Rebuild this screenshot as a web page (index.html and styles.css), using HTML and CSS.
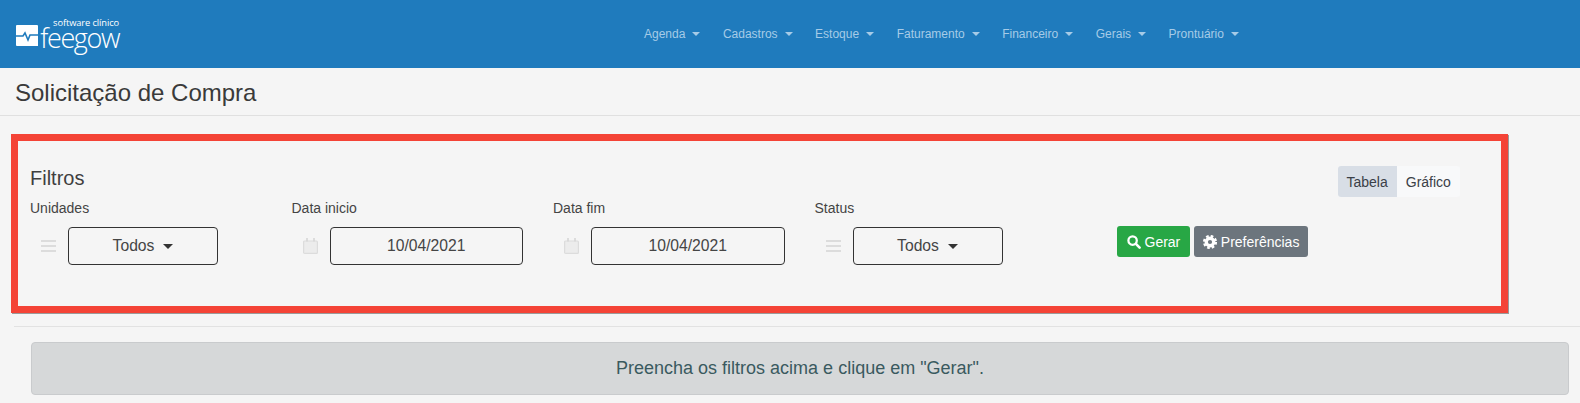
FILE: index.html
```html
<!DOCTYPE html>
<html lang="pt-BR">
<head>
<meta charset="utf-8">
<title>Solicitação de Compra</title>
<link rel="stylesheet" href="styles.css">
</head>
<body>
<header class="topbar">
  <a class="logo">
    <svg class="logo-mark" viewBox="0 0 22 21" width="22" height="21"><path fill="#fff" d="M1 0h20a1 1 0 0 1 1 1v20H1a1 1 0 0 1-1-1V1a1 1 0 0 1 1-1z"/><path fill="none" stroke="#1f7bbd" stroke-width="1.6" d="M0 11h7l2-3 3 7 2-5h8"/></svg>
    <span class="logo-words"><span class="logo-sub">software clínico</span><span class="logo-name">feegow</span></span>
  </a>
  <nav class="menu">
    <a class="menu-item">Agenda</a>
    <a class="menu-item">Cadastros</a>
    <a class="menu-item">Estoque</a>
    <a class="menu-item">Faturamento</a>
    <a class="menu-item">Financeiro</a>
    <a class="menu-item">Gerais</a>
    <a class="menu-item">Prontuário</a>
  </nav>
</header>
<div class="page-title"><h1>Solicitação de Compra</h1></div>
<section class="filters">
  <div class="filters-head">
    <h2>Filtros</h2>
    <div class="tabs"><span class="tab tab-active">Tabela</span><span class="tab">Gráfico</span></div>
  </div>
  <div class="filters-row">
    <div class="field">
      <label>Unidades</label>
      <div class="control">
        <svg class="addon" viewBox="0 0 15 14" width="15" height="14"><path stroke="#dcdcdc" stroke-width="2" d="M0 2h15M0 7h15M0 12h15"/></svg>
        <div class="box box-select">Todos<i class="caret"></i></div>
      </div>
    </div>
    <div class="field">
      <label>Data inicio</label>
      <div class="control">
        <svg class="addon" viewBox="0 0 15 16" width="15" height="16"><path fill="#ececec" stroke="#dcdcdc" stroke-width="1.2" d="M1.6 3h11.800a1 1 0 0 1 1 1v10.400a1 1 0 0 1-1 1H1.600a1 1 0 0 1-1-1V4a1 1 0 0 1 1-1z"/><path stroke="#d4d4d4" stroke-width="1.500" d="M4 0v3.500M11 0v3.500"/></svg>
        <div class="box box-date">10/04/2021</div>
      </div>
    </div>
    <div class="field">
      <label>Data fim</label>
      <div class="control">
        <svg class="addon" viewBox="0 0 15 16" width="15" height="16"><path fill="#ececec" stroke="#dcdcdc" stroke-width="1.2" d="M1.600 3h11.800a1 1 0 0 1 1 1v10.400a1 1 0 0 1-1 1H1.600a1 1 0 0 1-1-1V4a1 1 0 0 1 1-1z"/><path stroke="#d4d4d4" stroke-width="1.500" d="M4 0v3.500M11 0v3.500"/></svg>
        <div class="box box-date">10/04/2021</div>
      </div>
    </div>
    <div class="field">
      <label>Status</label>
      <div class="control">
        <svg class="addon" viewBox="0 0 15 14" width="15" height="14"><path stroke="#dcdcdc" stroke-width="2" d="M0 2h15M0 7h15M0 12h15"/></svg>
        <div class="box box-select">Todos<i class="caret"></i></div>
      </div>
    </div>
    <div class="actions">
      <button class="btn btn-green"><svg viewBox="0 0 15 15" width="14" height="14"><circle cx="6" cy="6" r="4.500" fill="none" stroke="#fff" stroke-width="2.400"/><path stroke="#fff" stroke-width="2.800" stroke-linecap="round" d="M9.800 9.800l3.700 3.700"/></svg>Gerar</button>
      <button class="btn btn-gray"><svg viewBox="0 0 16 16" width="14" height="14"><circle cx="8" cy="8" r="4.300" fill="none" stroke="#fff" stroke-width="3.800"/><circle cx="8" cy="8" r="6.800" fill="none" stroke="#fff" stroke-width="2.600" stroke-dasharray="3 2.340"/></svg>Preferências</button>
    </div>
  </div>
</section>
<hr class="divider">
<div class="alert">Preencha os filtros acima e clique em "Gerar".</div>
</body>
</html>
```
FILE: styles.css
```css
* { box-sizing: border-box; }
html, body { margin: 0; height: 403px; overflow: hidden; }
body { background: #f5f5f5; font-family: "Liberation Sans", Arial, sans-serif; color: #3b3b3b; }

.topbar { height: 68px; background: #1f7bbd; display: flex; align-items: center; }
.logo { width: 644px; padding-left: 16px; display: flex; align-items: flex-start; gap: 3px; height: 34px; margin-top: -2px; }
.logo-mark { flex: none; margin-top: 9px; }
.logo-words { display: flex; flex-direction: column; align-items: flex-end; color: #fff; width: 78px; }
.logo-sub { font-family: "Open Sans", sans-serif; font-size: 9.300px; line-height: 10px; margin-top: 2px; letter-spacing: -.1px; white-space: nowrap; }
.logo-name { font-family: "Open Sans", sans-serif; font-weight: 300; font-size: 27px; line-height: 20px; letter-spacing: -1.400px; }
.menu { display: flex; gap: 22.500px; }
.menu-item { font-size: 12px; line-height: 16px; color: #a6cbe7; display: flex; align-items: center; }
.menu-item::after { content: ""; margin-left: 7px; border-top: 4px solid #a6cbe7; border-left: 4px solid transparent; border-right: 4px solid transparent; }

.page-title { height: 48px; border-bottom: 1px solid #e0e0e0; padding: 2px 0 0 15px; display: flex; align-items: center; }
h1 { margin: 0; font-size: 24px; font-weight: 400; color: #3a3a3a; }

.filters { margin: 18px 0 0 11px; width: 1497px; height: 179px; border: 7px solid #f44336; box-shadow: 1px 1px 0 #9a9a9a; padding: 25px 0 0 12px; }
.filters-head { display: flex; align-items: flex-start; height: 32px; }
h2 { margin: 0; width: 1307.500px; font-size: 20px; line-height: 24px; font-weight: 400; color: #3f3f3f; }
.tabs { display: flex; height: 31px; background: #f8f9fa; border-radius: 3px; font-size: 14px; }
.tab { display: flex; align-items: center; padding: 0 9px; color: #3a4047; }
.tab-active { background: #d8dee6; border-radius: 3px 0 0 3px; }
.filters-row { display: flex; }
.field { width: 261.500px; }
.field label { display: block; font-size: 14px; line-height: 20px; color: #444; }
.control { display: flex; align-items: center; gap: 12px; margin-top: 9px; padding-left: 11px; }
.addon { flex: none; }
.box { height: 38px; border: 1px solid #333; border-radius: 4px; display: flex; align-items: center; justify-content: center; font-size: 15.700px; color: #454545; }
.box-select { width: 150px; }
.box-date { width: 193.500px; }
.caret { margin-left: 9px; color: #333; border-top: 5px solid; border-left: 5px solid transparent; border-right: 5px solid transparent; }

.actions { display: flex; gap: 4px; margin-left: 41px; margin-top: 28px; height: 31px; }
.btn { height: 31px; border: 0; border-radius: 3px; color: #fff; font: 14px "Liberation Sans", Arial, sans-serif; display: flex; align-items: center; gap: 4px; padding: 0 9.500px; }
.btn-green { background: #28a745; }
.btn-gray { background: #6c757d; padding: 0 9px; }

.divider { margin: 13px 0 0 14px; border: 0; border-top: 1px solid #e2e2e2; height: 0; }
.alert { margin: 15px 0 0 31px; width: 1538px; height: 53px; background: #d6d8d9; border: 1px solid #c9cbcd; border-radius: 4px; display: flex; align-items: center; justify-content: center; font-size: 18px; color: #3a5a5f; }
```
